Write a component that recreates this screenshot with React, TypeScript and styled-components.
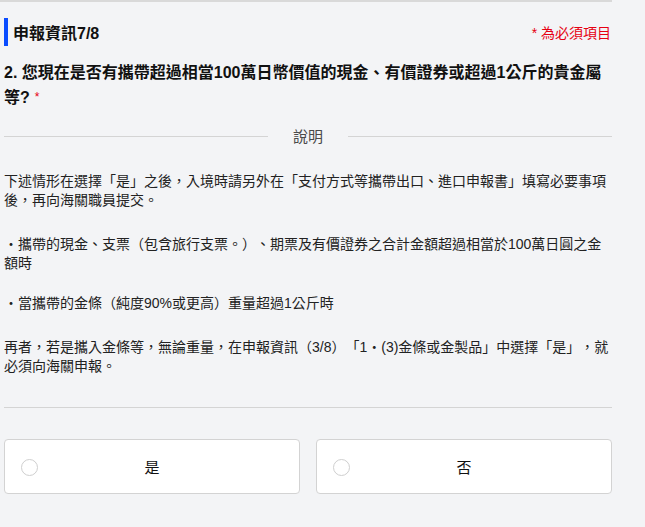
import React from 'react'
import styled, { createGlobalStyle } from 'styled-components'

const GlobalStyle = createGlobalStyle`
  html, body {
    margin: 0;
    padding: 0;
    background: #f3f4f6;
  }
  body {
    font-family: "Liberation Sans", "Noto Sans CJK TC", sans-serif;
    color: #222;
    text-spacing-trim: space-all;
  }
`

const Page = styled.div`
  border-top: 2px solid #d9d9d9;
  min-height: 525px;
  padding: 16px 0 0 4px;
  width: 608px;
`

const HeaderRow = styled.div`
  display: flex;
  align-items: center;
  justify-content: space-between;
  height: 28px;
  border-left: 4px solid #0a4cff;
  padding-left: 5px;
`

const Title = styled.h2`
  margin: 0;
  font-size: 16px;
  font-weight: 700;
  color: #111;
`

const RequiredNote = styled.span`
  font-size: 14px;
  color: #e60012;
  margin-right: 1px;
`

const Question = styled.h3`
  margin: 14px 0 0;
  font-size: 16px;
  line-height: 25px;
  font-weight: 700;
  color: #111;
`

const Star = styled.span`
  color: #e60012;
  font-size: 12px;
  font-weight: 400;
  margin-left: 5px;
  position: relative;
  top: -2px;
`

const Divider = styled.div`
  display: flex;
  align-items: center;
  gap: 25px;
  margin-top: 14px;
  font-size: 15px;
  line-height: 21px;
  color: #4a4a4a;

  &::before,
  &::after {
    content: '';
    flex: 1;
    height: 1px;
    background: #d4d4d4;
  }
`

const Body = styled.div`
  margin-top: 25px;
  font-size: 14px;
  line-height: 19px;
  color: #222;
`

const Para = styled.p<{ $gap: number }>`
  margin: ${({ $gap }) => $gap}px 0 0;
`

const Rule = styled.hr`
  border: none;
  height: 1px;
  background: #d4d4d4;
  margin: 31px 0 0;
`

const Options = styled.div`
  display: grid;
  grid-template-columns: 1fr 1fr;
  gap: 16px;
  margin-top: 31px;
`

const Option = styled.label`
  position: relative;
  display: flex;
  align-items: center;
  justify-content: center;
  height: 53px;
  background: #fff;
  border: 1px solid #d3d3d3;
  border-radius: 4px;
  font-size: 15px;
  color: #111;
  cursor: pointer;
`

const Radio = styled.span`
  position: absolute;
  left: 16px;
  top: 50%;
  width: 15px;
  height: 15px;
  margin-top: -8px;
  border: 1px solid #cfcfcf;
  border-radius: 50%;
  background: #fff;
`

const paragraphs = [
  { gap: 0, text: '下述情形在選擇「是」之後，入境時請另外在「支付方式等攜帶出口、進口申報書」填寫必要事項後，再向海關職員提交。' },
  { gap: 25, text: '・攜帶的現金、支票（包含旅行支票。）、期票及有價證券之合計金額超過相當於100萬日圓之金額時' },
  { gap: 21, text: '・當攜帶的金條（純度90%或更高）重量超過1公斤時' },
  { gap: 25, text: '再者，若是攜入金條等，無論重量，在申報資訊（3/8）「1・(3)金條或金製品」中選擇「是」，就必須向海關申報。' },
]

export default function App() {
  return (
    <>
      <GlobalStyle />
      <Page>
        <HeaderRow>
          <Title>申報資訊7/8</Title>
          <RequiredNote>* 為必須項目</RequiredNote>
        </HeaderRow>

        <Question>
          2. 您現在是否有攜帶超過相當100萬日幣價值的現金、有價證券或超過1公斤的貴金屬等?
          <Star>*</Star>
        </Question>

        <Divider>說明</Divider>

        <Body>
          {paragraphs.map((p, i) => (
            <Para key={i} $gap={p.gap}>
              {p.text}
            </Para>
          ))}
        </Body>

        <Rule />

        <Options>
          <Option>
            <Radio />
            是
          </Option>
          <Option>
            <Radio />
            否
          </Option>
        </Options>
      </Page>
    </>
  )
}
